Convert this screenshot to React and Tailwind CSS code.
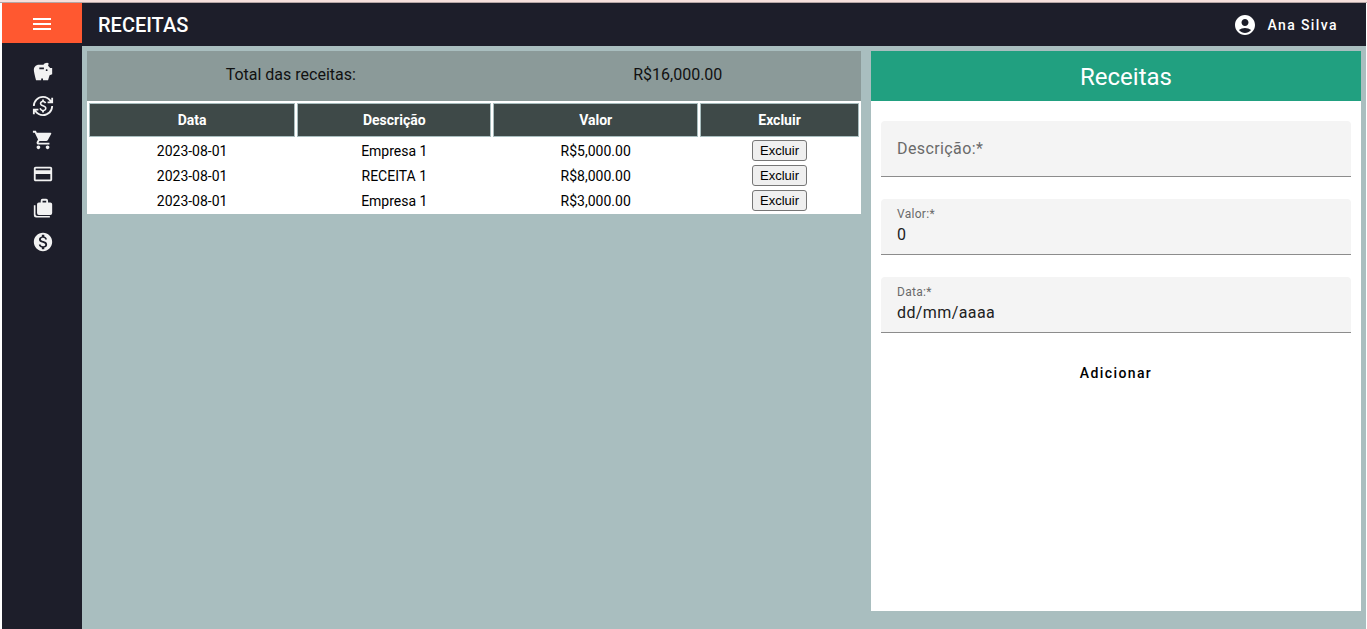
import {
  MdAccountCircle,
  MdCreditCard,
  MdCurrencyExchange,
  MdMenu,
  MdMonetizationOn,
  MdSavings,
  MdShoppingCart,
} from "react-icons/md";

function CasesIcon({ className }) {
  return (
    <svg viewBox="0 0 24 24" fill="currentColor" className={className} aria-hidden="true">
      <path d="M17.5 6V4a2 2 0 0 0-2-2h-4a2 2 0 0 0-2 2v2H7.500a2 2 0 0 0-2 2v9.500a2 2 0 0 0 2 2H20a2 2 0 0 0 2-2V8a2 2 0 0 0-2-2zM11.500 4h4v2h-4z" />
      <path d="M2 9h1.800v9.700a2 2 0 0 0 2 2H19.500v1.600H4.500A2.500 2.500 0 0 1 2 19.800z" />
    </svg>
  );
}

const links = [
  { label: "Economias", Icon: MdSavings },
  { label: "Câmbio", Icon: MdCurrencyExchange },
  { label: "Compras", Icon: MdShoppingCart },
  { label: "Cartões", Icon: MdCreditCard },
  { label: "Carteira", Icon: CasesIcon },
  { label: "Receitas", Icon: MdMonetizationOn },
];

const receitas = [
  { data: "2023-08-01", descricao: "Empresa 1", valor: "R$5,000.00" },
  { data: "2023-08-01", descricao: "RECEITA 1", valor: "R$8,000.00" },
  { data: "2023-08-01", descricao: "Empresa 1", valor: "R$3,000.00" },
];

const columns = [
  { title: "Data", width: "w-[27%]" },
  { title: "Descrição", width: "w-[25.4%]" },
  { title: "Valor", width: "w-[26.8%]" },
  { title: "Excluir", width: "w-[20.8%]" },
];

function Sidebar() {
  return (
    <aside className="flex w-20 shrink-0 flex-col bg-[#1d1e2a]">
      <button
        type="button"
        aria-label="Menu"
        className="flex h-10 items-center justify-center bg-[#ff5830] pt-[2px] text-white"
      >
        <MdMenu className="size-6" />
      </button>
      <nav className="flex flex-col items-center gap-3 pt-[18px] pl-[2px] text-[#f2f2f2]">
        {links.map(({ label, Icon }) => (
          <a key={label} href="#" aria-label={label}>
            <Icon className="size-[22px]" />
          </a>
        ))}
      </nav>
    </aside>
  );
}

function Header() {
  return (
    <header className="flex h-[43px] items-center justify-between bg-[#1d1e2a] px-4 text-white">
      <h1 className="text-xl font-medium">RECEITAS</h1>
      <button type="button" className="flex items-center gap-2.5 pr-3 text-sm font-medium tracking-widest">
        <MdAccountCircle className="size-6" />
        Ana Silva
      </button>
    </header>
  );
}

function IncomeList() {
  return (
    <section className="min-w-0 flex-1">
      <div className="flex h-[50px] items-center justify-around bg-[#8b9a99] pb-[2px] text-base text-[#111111]">
        <span>Total das receitas:</span>
        <span>R$16,000.00</span>
      </div>
      <table className="w-full table-fixed border-separate border-spacing-[2px] bg-white text-center text-sm text-black">
        <thead>
          <tr>
            {columns.map(({ title, width }) => (
              <th
                key={title}
                className={`${width} h-[34px] border border-[#a9bebf] bg-[#3e4948] p-0 font-bold text-white`}
              >
                {title}
              </th>
            ))}
          </tr>
        </thead>
        <tbody>
          {receitas.map(({ data, descricao, valor }, i) => (
            <tr key={i}>
              <td className="p-px">{data}</td>
              <td className="p-px">{descricao}</td>
              <td className="p-px">{valor}</td>
              <td className="p-px">
                <button
                  type="button"
                  className="mx-auto block h-[21px] rounded-[3px] border border-[#767676] bg-[#efefef] px-[7px] font-['Liberation_Sans',Arial,sans-serif] text-[13px] leading-[19px] text-black"
                >
                  Excluir
                </button>
              </td>
            </tr>
          ))}
        </tbody>
      </table>
    </section>
  );
}

const fieldBox = "relative flex h-14 rounded-t border-b border-[#8c8c8c] bg-[#f4f4f4]";
const floatingLabel = "absolute top-2 left-4 text-xs leading-[14px] tracking-wide text-[#6a6a6a]";
const restingLabel =
  "pointer-events-none absolute top-4 left-4 text-base leading-6 tracking-wide text-[#6a6a6a]";
const filledInput =
  "w-full bg-transparent px-4 pt-6 pb-2 text-base leading-6 tracking-wide text-[#212121] outline-none";

function IncomeForm() {
  return (
    <section className="h-[560px] w-[490px] shrink-0 bg-white">
      <h2 className="flex h-[50px] items-center justify-center bg-[#21a080] pt-[2px] pl-5 text-2xl text-white">
        Receitas
      </h2>
      <form className="flex flex-col gap-[22px] px-2.5 pt-5">
        <div className={fieldBox}>
          <input id="descricao" type="text" className={filledInput} />
          <label htmlFor="descricao" className={restingLabel}>
            Descrição:*
          </label>
        </div>
        <div className={fieldBox}>
          <label htmlFor="valor" className={floatingLabel}>
            Valor:*
          </label>
          <input id="valor" type="text" inputMode="decimal" defaultValue="0" className={filledInput} />
        </div>
        <div className={fieldBox}>
          <label htmlFor="data" className={floatingLabel}>
            Data:*
          </label>
          <input
            id="data"
            type="text"
            placeholder="dd/mm/aaaa"
            className={`${filledInput} placeholder:text-[#212121]`}
          />
        </div>
        <button type="button" className="h-9 self-center px-4 text-sm font-medium tracking-widest text-black">
          Adicionar
        </button>
      </form>
    </section>
  );
}

export default function App() {
  return (
    <div className="flex min-h-screen flex-col bg-white font-[Roboto,sans-serif]">
      <div className="h-[3px] border-b border-[#b5a5a5] bg-[#f6e0dc]" />
      <div className="flex flex-1 pr-px pl-[2px]">
        <Sidebar />
        <div className="flex min-w-0 flex-1 flex-col bg-[#a9bebf]">
          <Header />
          <main className="flex flex-1 items-start gap-2.5 p-[5px]">
            <IncomeList />
            <IncomeForm />
          </main>
        </div>
      </div>
    </div>
  );
}
